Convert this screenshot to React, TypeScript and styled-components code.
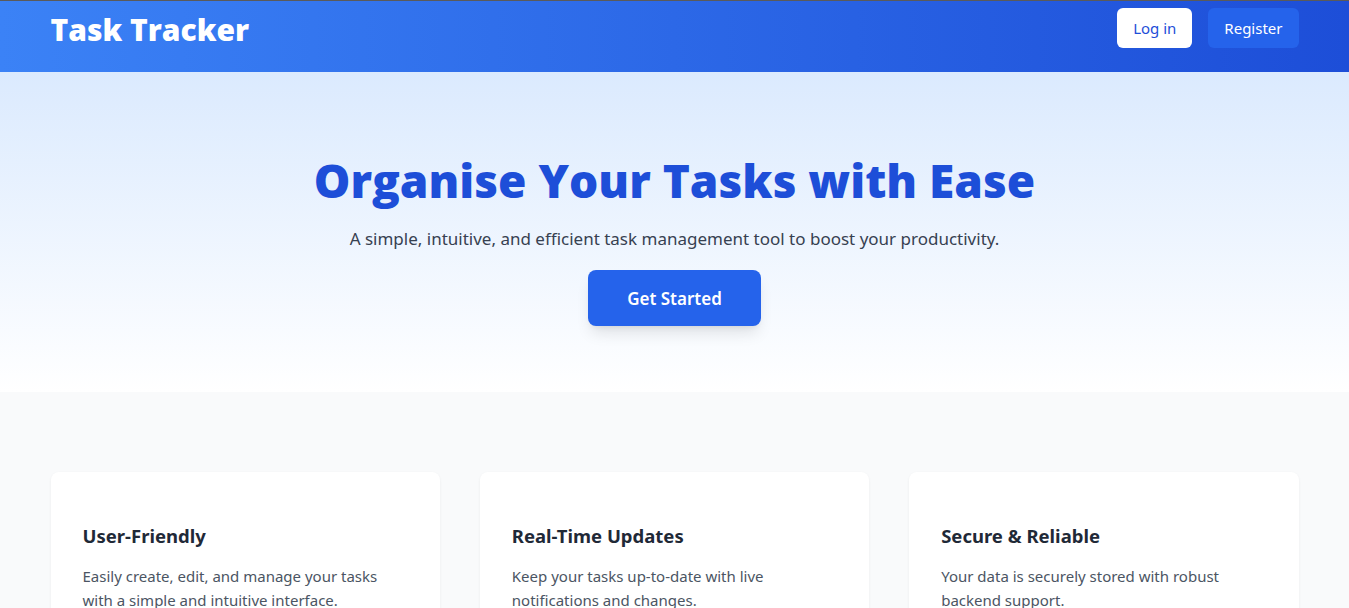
import React from "react";
import styled, { createGlobalStyle } from "styled-components";

const features = [
    {
        title: "User-Friendly",
        text: "Easily create, edit, and manage your tasks with a simple and intuitive interface.",
    },
    {
        title: "Real-Time Updates",
        text: "Keep your tasks up-to-date with live notifications and changes.",
    },
    {
        title: "Secure & Reliable",
        text: "Your data is securely stored with robust backend support.",
    },
];

const App = () => {
    return (
        <>
            <GlobalStyle />
            <Header>
                <Container>
                    <NavRow>
                        <Logo>Task Tracker</Logo>
                        <NavButtons>
                            <NavButton $primary={false}>Log in</NavButton>
                            <NavButton $primary>Register</NavButton>
                        </NavButtons>
                    </NavRow>
                </Container>
            </Header>
            <Hero>
                <HeroTitle>Organise Your Tasks with Ease</HeroTitle>
                <HeroText>
                    A simple, intuitive, and efficient task management tool to boost your productivity.
                </HeroText>
                <CtaButton>Get Started</CtaButton>
            </Hero>
            <Features>
                <Container>
                    <CardGrid>
                        {features.map((f) => (
                            <Card key={f.title}>
                                <CardTitle>{f.title}</CardTitle>
                                <CardText>{f.text}</CardText>
                            </Card>
                        ))}
                    </CardGrid>
                </Container>
            </Features>
        </>
    );
};

export default App;

const GlobalStyle = createGlobalStyle`
    * {
        box-sizing: border-box;
    }
    body {
        margin: 0;
        font-family: "Noto Sans", "Open Sans", sans-serif;
        background: #f9fafb;
    }
`;

const Container = styled.div`
    max-width: 1280px;
    margin: 0 auto;
    padding: 0 16px;
`;

const Header = styled.header`
    height: 72px;
    border-top: 1px solid #5a5a5a;
    background: linear-gradient(to right, #3b82f6, #1d4ed8);
`;

const NavRow = styled.div`
    display: flex;
    align-items: flex-start;
    justify-content: space-between;
`;

const Logo = styled.h1`
    margin: 0;
    padding-top: 11px;
    font-size: 30px;
    font-weight: 800;
    line-height: 36px;
    color: #fff;
    font-family: "Open Sans", sans-serif;
`;

const NavButtons = styled.div`
    display: flex;
    gap: 16px;
    padding-top: 7px;
`;

const NavButton = styled.button<{ $primary: boolean }>`
    height: 40px;
    padding: 0 16px;
    border: none;
    border-radius: 6px;
    font-family: inherit;
    font-size: 15px;
    background: ${(p) => (p.$primary ? "#2563eb" : "#fff")};
    color: ${(p) => (p.$primary ? "#fff" : "#1d4ed8")};
`;

const Hero = styled.section`
    height: 320px;
    display: flex;
    flex-direction: column;
    align-items: center;
    padding-top: 80px;
    background: linear-gradient(to bottom, #dbeafe, #ffffff);
`;

const HeroTitle = styled.h2`
    margin: 0;
    font-family: "Open Sans", sans-serif;
    font-size: 46px;
    line-height: 56px;
    font-weight: 800;
    color: #1d4ed8;
`;

const HeroText = styled.p`
    margin: 17px 0 0;
    font-size: 17px;
    line-height: 28px;
    color: #374151;
`;

const CtaButton = styled.button`
    margin-top: 17px;
    width: 173px;
    height: 56px;
    border: none;
    border-radius: 8px;
    background: #2563eb;
    color: #fff;
    font-family: inherit;
    font-size: 17px;
    font-weight: 600;
    box-shadow: 0 10px 15px -3px rgba(0, 0, 0, 0.1), 0 4px 6px -4px rgba(0, 0, 0, 0.1);
`;

const Features = styled.section`
    padding: 80px 0;
    background: #f9fafb;
`;

const CardGrid = styled.div`
    display: grid;
    grid-template-columns: repeat(3, 1fr);
    gap: 40px;
`;

const Card = styled.div`
    padding: 50px 32px 32px;
    background: #fff;
    border-radius: 8px;
    box-shadow: 0 1px 3px rgba(0, 0, 0, 0.06);
`;

const CardTitle = styled.h3`
    margin: 0;
    font-size: 18.5px;
    line-height: 28px;
    font-weight: 700;
    color: #1f2937;
`;

const CardText = styled.p`
    margin: 14px 0 0;
    font-size: 15px;
    line-height: 24px;
    color: #4b5563;
`;
